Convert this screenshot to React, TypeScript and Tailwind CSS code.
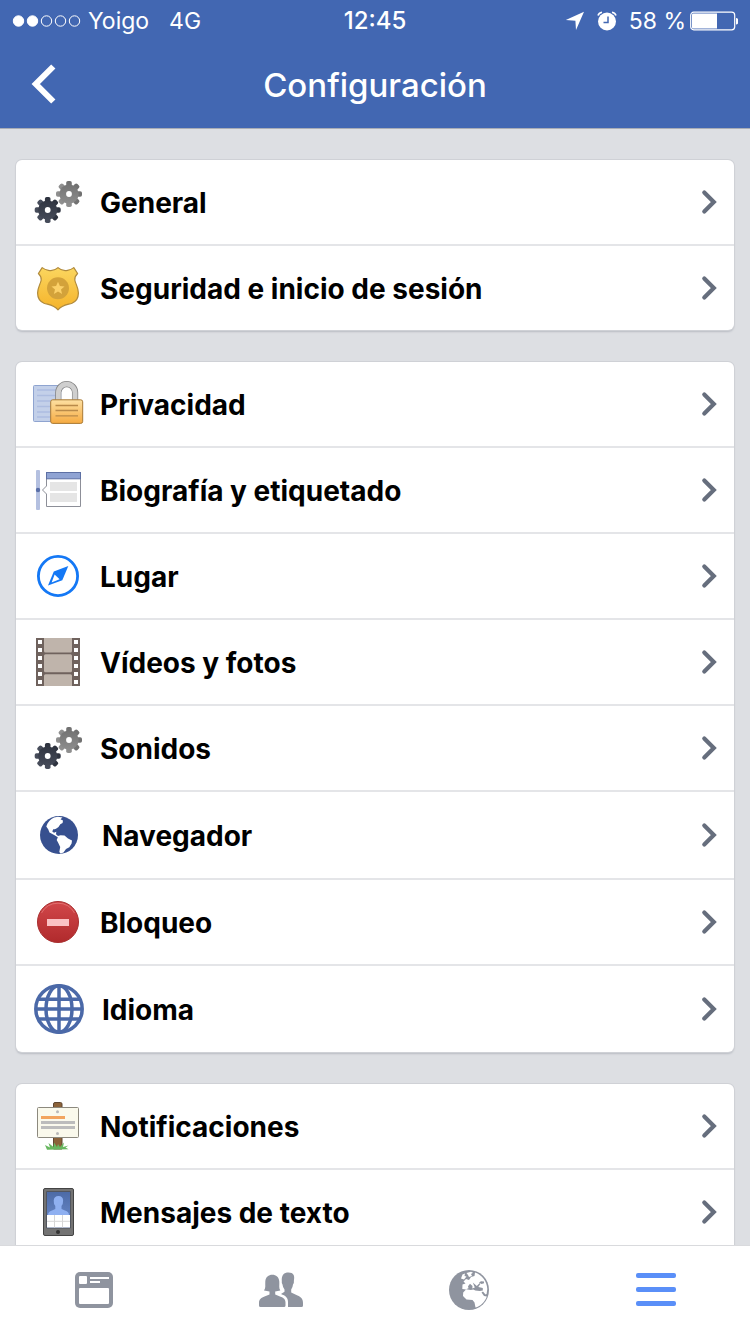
import type { ReactNode } from "react";

interface Item {
    label: string;
    icon: ReactNode;
}

function Gear({ x, y, fill }: { x: number; y: number; fill: string }) {
    return (
        <g transform={`translate(${x} ${y})`} fill={fill}>
            {[0, 45, 90, 135].map((angle) => (
                <rect key={angle} x="-2.8" y="-13" width="5.6" height="26" rx="1.8" transform={`rotate(${angle})`} />
            ))}
            <circle r="9.6" />
            <circle r="2.9" fill="#fff" />
        </g>
    );
}

function GearsIcon() {
    return (
        <svg className="size-12 shrink-0" viewBox="0 0 48 48" aria-hidden="true">
            <defs>
                <linearGradient id="gearLight" gradientUnits="userSpaceOnUse" x1="0" y1="-13" x2="0" y2="13">
                    <stop offset="0" stopColor="#6f6f6f" />
                    <stop offset="1" stopColor="#919191" />
                </linearGradient>
                <linearGradient id="gearDark" gradientUnits="userSpaceOnUse" x1="0" y1="-13" x2="0" y2="13">
                    <stop offset="0" stopColor="#2c313d" />
                    <stop offset="1" stopColor="#484e5c" />
                </linearGradient>
            </defs>
            <Gear x={35} y={16} fill="url(#gearLight)" />
            <Gear x={13.7} y={32} fill="url(#gearDark)" />
        </svg>
    );
}

function BadgeIcon() {
    return (
        <svg className="size-12 shrink-0" viewBox="0 0 48 48" aria-hidden="true">
            <defs>
                <linearGradient id="gold" x1="0" y1="0" x2="0" y2="1">
                    <stop offset="0" stopColor="#fbd65f" />
                    <stop offset="1" stopColor="#f5b32a" />
                </linearGradient>
            </defs>
            <path
                d="M24 3.6C21.5 6 18 7 14.5 6.3C12 5.9 10 5 8.2 3.6L4.4 9.5C6.5 11.5 7.5 13.5 7.2 16C6.5 20 3.6 23.5 3.6 29C3.6 34 6 37.5 10 39.2C15 40.8 20 41 24 45.8C28 41 33 40.8 38 39.2C42 37.5 44.4 34 44.4 29C44.4 23.5 41.5 20 40.8 16C40.5 13.5 41.5 11.5 43.6 9.5L39.8 3.6C38 5 36 5.9 33.5 6.3C30 7 26.5 6 24 3.6Z"
                fill="url(#gold)"
                stroke="#b08a3c"
                strokeWidth="1.2"
                strokeLinejoin="round"
            />
            <circle cx="24" cy="24.3" r="11" fill="#d3a23a" />
            <path d="M24 17.8l1.9 4.3 4.6.4-3.5 3 1.1 4.5-4.1-2.4-4.1 2.4 1.1-4.5-3.5-3 4.6-.4z" fill="#fbd068" />
        </svg>
    );
}

function PrivacyIcon() {
    return (
        <svg className="size-12 shrink-0 overflow-visible" viewBox="0 0 48 48" aria-hidden="true">
            <defs>
                <linearGradient id="lockBody" x1="0" y1="0" x2="0" y2="1">
                    <stop offset="0" stopColor="#fde0a2" />
                    <stop offset="1" stopColor="#f6ab42" />
                </linearGradient>
            </defs>
            <rect x="-.5" y="5.5" width="30" height="36" rx="1" fill="#c3d0e9" stroke="#8fa4d0" />
            {[10, 15.5, 21, 26.5, 32, 37].map((y) => (
                <path key={y} d={`M3 ${y}H24`} stroke="#adbde0" strokeWidth="1.5" />
            ))}
            <path d="M24.4 20V12.5a8.3 8.3 0 0 1 16.6 0V20" fill="none" stroke="#858585" strokeWidth="6.4" />
            <path d="M24.4 20V12.5a8.3 8.3 0 0 1 16.6 0V20" fill="none" stroke="#cfcfcf" strokeWidth="4.8" />
            <path d="M27.6 20V12.6a5.1 5.1 0 0 1 10.2 0V20z" fill="#fff" />
            <rect x="16.7" y="19.8" width="32" height="23.6" rx="2" fill="url(#lockBody)" stroke="#a87935" />
            <path d="M21.5 25.500H44M21.5 30.500H44M21.5 35.800H44" stroke="#b98a4a" strokeWidth="1.3" />
        </svg>
    );
}

function TimelineIcon() {
    return (
        <svg className="size-12 shrink-0" viewBox="0 0 48 48" aria-hidden="true">
            <rect x="2" y="4" width="4" height="40" rx="1" fill="#b4c0e0" />
            <circle cx="4" cy="24" r="2.2" fill="#5a6fa8" />
            <path d="M12.5 6.500h34v34h-34v-12.500l-4-4 4-4z" fill="#fff" stroke="#8d8f98" />
            <rect x="12.5" y="6.5" width="34" height="6.3" fill="#8fa3d3" stroke="#5d70a4" />
            <path d="M16 16h27v9H16zM16 27h27v9H16z" fill="#e5e5e5" />
        </svg>
    );
}

function CompassIcon() {
    return (
        <svg className="size-12 shrink-0" viewBox="0 0 48 48" aria-hidden="true">
            <circle cx="24" cy="24" r="19.6" fill="none" stroke="#1478f5" strokeWidth="2.8" />
            <path d="M34.3 14L19.8 19.4L14 33.6L28.3 28.2Z" fill="#1478f5" />
            <path d="M20.600 22.600L25.600 27.300L17.600 30.400Z" fill="#fff" />
        </svg>
    );
}

function FilmIcon() {
    return (
        <svg className="size-12 shrink-0" viewBox="0 0 48 48" aria-hidden="true">
            <path d="M2 0h44v48H2z" fill="#6f625d" />
            <path
                d="M10 0h28v13q0 1.500-1.500 1.500h-25Q10 14.500 10 13zM11.500 16.300h25q1.500 0 1.500 1.500v15q0 1.500-1.500 1.500h-25q-1.500 0-1.500-1.500v-15q0-1.500 1.500-1.500zM11.500 36.200h25q1.500 0 1.500 1.500V48H10V37.700q0-1.500 1.500-1.500z"
                fill="#bfb4ab"
            />
            {[2, 10, 18, 26, 34, 42].map((y) => (
                <path key={y} d={`M4 ${y}h4v4H4zM40 ${y}h4v4h-4z`} fill="#fff" />
            ))}
        </svg>
    );
}

function AmericasIcon() {
    return (
        <svg className="size-[50px] shrink-0" viewBox="0 0 50 50" aria-hidden="true">
            <circle cx="25" cy="25" r="19" fill="#37508f" />
            <path
                d="M12.3 16.5C13.5 12 16.500 9.500 20 7.600L24 6.800L28.500 7.600L26.500 9.300L29 10.500L28.600 13L26.300 14.300L24.500 17L22 18.800L20.600 19.300L19.200 19.200L18.300 21.400L20 22.800L22.300 21.800L22 24.300L24 26L26.500 25.200L30.500 25.600L34 28.600L38 30.500L37.600 33.500L35.300 37.200L32 39L29.500 42.500L26.600 43.400L25.300 42L26.200 37L24.300 33L22.700 30L23.800 27.300L21 25.500L18.300 23.900L15.500 22.600L14.200 19.200Z"
                fill="#fff"
            />
        </svg>
    );
}

function BlockIcon() {
    return (
        <svg className="size-12 shrink-0" viewBox="0 0 48 48" aria-hidden="true">
            <defs>
                <linearGradient id="stop" x1="0" y1="0" x2="0" y2="1">
                    <stop offset="0" stopColor="#d2474a" />
                    <stop offset="1" stopColor="#b02a2c" />
                </linearGradient>
            </defs>
            <circle cx="24" cy="24" r="20.5" fill="url(#stop)" stroke="#a82f2f" />
            <path d="M7.500 15a18.800 18.800 0 0 1 33 0" fill="none" stroke="#e47a78" strokeWidth=".8" />
            <path d="M13 21h22v7H13z" fill="#fbc1c3" />
        </svg>
    );
}

function LanguageIcon() {
    return (
        <svg className="size-[50px] shrink-0" viewBox="0 0 50 50" fill="none" stroke="#4b69a8" strokeWidth="3.5" aria-hidden="true">
            <circle cx="25" cy="25" r="23.2" />
            <ellipse cx="25" cy="25" rx="13" ry="23.2" />
            <path d="M25 2v46M2 25h46M4 15.300h42M4 35h42" />
        </svg>
    );
}

function SignIcon() {
    return (
        <svg className="size-12 shrink-0" viewBox="0 0 48 48" aria-hidden="true">
            <path d="M19.500 47V2q0-1.500 1.500-1.500h5.500Q28 .5 28 2V47z" fill="#8b6239" stroke="#5f4630" />
            <rect x="3.5" y="5.5" width="41" height="30" rx="1" fill="#faf9ec" stroke="#8c897e" />
            <path d="M7 15.500h24" stroke="#f2a45f" strokeWidth="3" />
            <path d="M7 20.500h34M7 25.500h34" stroke="#bcbcbc" strokeWidth="3" />
            <circle cx="23.5" cy="9.7" r="1.5" fill="#b9b9b9" />
            <circle cx="23.5" cy="31.4" r="1.5" fill="#b9b9b9" />
            <path d="M13 47.700L11 43l5 2.500L14.500 41l5 4 .5-4.500 3 4.500 1-3 2 3 4-4.500-1 4.500 5.500-1.500-3 2 3 1.700z" fill="#67b75f" />
        </svg>
    );
}

function PhoneIcon() {
    return (
        <svg className="size-12 shrink-0" viewBox="0 0 48 48" aria-hidden="true">
            <defs>
                <linearGradient id="screen" x1="0" y1="0" x2="0" y2="1">
                    <stop offset="0" stopColor="#4c6aa6" />
                    <stop offset="1" stopColor="#6f8fd0" />
                </linearGradient>
            </defs>
            <rect x="9.500" y=".5" width="30" height="47" rx="1.5" fill="#737373" stroke="#444" />
            <path d="M12.500 3.500h24v36.500h-24z" fill="url(#screen)" stroke="#51555e" />
            <path d="M14 27q0-3.500 4-4.500l3.300-1.500v-3q-1.800-2-1.600-5.500Q20 8 24.500 8t4.600 4.500q.2 3.500-1.600 5.500v3l3.500 1.500q4 1 4 4.500z" fill="#8fb0f1" />
            <path d="M13 27h23v12.500H13z" fill="#fff" />
            <path d="M20.500 27v12.500M28.500 27v12.500M13 33.300h23" stroke="#d6d6d6" />
            <circle cx="24" cy="43.9" r="2" fill="#333" />
        </svg>
    );
}

const groups: Item[][] = [
    [
        { label: "General", icon: <GearsIcon /> },
        { label: "Seguridad e inicio de sesión", icon: <BadgeIcon /> },
    ],
    [
        { label: "Privacidad", icon: <PrivacyIcon /> },
        { label: "Biografía y etiquetado", icon: <TimelineIcon /> },
        { label: "Lugar", icon: <CompassIcon /> },
        { label: "Vídeos y fotos", icon: <FilmIcon /> },
        { label: "Sonidos", icon: <GearsIcon /> },
        { label: "Navegador", icon: <AmericasIcon /> },
        { label: "Bloqueo", icon: <BlockIcon /> },
        { label: "Idioma", icon: <LanguageIcon /> },
    ],
    [
        { label: "Notificaciones", icon: <SignIcon /> },
        { label: "Mensajes de texto", icon: <PhoneIcon /> },
    ],
];

function StatusBar() {
    return (
        <div className="grid grid-cols-3 items-center h-10 pt-0.5 px-3 text-[23px] leading-7">
            <div className="flex items-center">
                <svg className="w-[70px] h-3 mr-1.5" viewBox="0 0 70 12" fill="none" stroke="#fff" aria-hidden="true">
                    <circle cx="6.5" cy="6" r="5.2" fill="#fff" />
                    <circle cx="20.5" cy="6" r="5.2" fill="#fff" />
                    <circle cx="34.5" cy="6" r="5.2" />
                    <circle cx="48.5" cy="6" r="5.2" />
                    <circle cx="62.500" cy="6" r="5.2" />
                </svg>
                <span className="mr-5">Yoigo</span>
                <span>4G</span>
            </div>
            <span className="text-center text-2xl leading-7 font-medium">12:45</span>
            <div className="flex items-center justify-end">
                <svg className="size-5 mr-3" viewBox="0 0 20 20" fill="#fff" aria-hidden="true">
                    <path d="M19 .800L.8 9l9.600.7L11 19z" />
                </svg>
                <svg className="size-5 mr-3" viewBox="0 0 20 20" aria-hidden="true">
                    <circle cx="10" cy="10.5" r="9" fill="#fff" />
                    <path d="M1 4.500Q1.800 2 5 1.300M19 4.500Q18.200 2 15 1.300" fill="none" stroke="#fff" strokeWidth="1.6" />
                    <path d="M11 5.500v6H6.500" fill="none" stroke="#4267b2" strokeWidth="1.5" />
                </svg>
                <span className="mr-1 whitespace-nowrap">58 %</span>
                <svg className="w-12 h-5 shrink-0" viewBox="0 0 48 20" fill="none" aria-hidden="true">
                    <rect x=".7" y="1.200" width="44" height="17.600" rx="3" stroke="#fff" strokeWidth="1.2" />
                    <path d="M2 3.500q0-1 1-1h24v15H3q-1 0-1-1z" fill="#fff" />
                    <path d="M46 7q2.500 0 2.500 3.200T46 13.500z" fill="#fff" />
                </svg>
            </div>
        </div>
    );
}

function Row({ item }: { item: Item }) {
    return (
        <li className="border-b-2 border-[#e4e5e8] last:border-b-0">
            <a href="#" className="flex items-center gap-[18px] pl-[18px] pr-4 py-[18px]">
                {item.icon}
                <span className="grow pt-0.5 text-[28px] leading-9 font-bold text-black">{item.label}</span>
                <svg
                    className="w-5 h-7 shrink-0"
                    viewBox="0 0 20 28"
                    fill="none"
                    stroke="#666e7d"
                    strokeWidth="4.2"
                    strokeLinecap="round"
                    aria-hidden="true"
                >
                    <path d="M6.300 4.500L15.800 14L6.300 23.500" />
                </svg>
            </a>
        </li>
    );
}

export default function App() {
    return (
        <div className="h-screen flex flex-col overflow-hidden bg-[#dddfe3] font-['Inter','Liberation_Sans',sans-serif]">
            <header className="shrink-0 bg-[#4267b2] text-white border-b border-[#a9adb6]">
                <StatusBar />
                <div className="grid grid-cols-[80px_1fr_80px] items-center h-[88px]">
                    <button type="button" aria-label="Atrás" className="pl-[30px]">
                        <svg className="w-7 h-10" viewBox="0 0 28 40" fill="none" stroke="#fff" strokeWidth="6" aria-hidden="true">
                            <path d="M23.300 2.500L5.800 20L23.300 37.500" />
                        </svg>
                    </button>
                    <h1 className="pt-0.5 text-center text-[33px] leading-10 font-medium">Configuración</h1>
                </div>
            </header>

            {/* Settings groups */}
            <main className="grow min-h-0 overflow-hidden px-4 pt-[31px] flex flex-col gap-8">
                {groups.map((group, index) => (
                    <ul key={index} className="shrink-0 bg-white rounded-md shadow-[0_0_0_1px_#cfd1d6,0_2px_2px_#b9bcc3]">
                        {group.map((item) => (
                            <Row key={item.label} item={item} />
                        ))}
                    </ul>
                ))}
            </main>

            {/* Tab bar */}
            <nav className="relative shrink-0 grid grid-cols-4 h-[89px] bg-white border-t border-[#d9dadd]">
                <button type="button" aria-label="Noticias" className="flex items-center justify-center">
                    <svg className="w-[38px] h-9" viewBox="0 0 38 36" aria-hidden="true">
                        <rect width="38" height="36" rx="5" fill="#8f949f" />
                        <path d="M4 5q0-1 1-1h6q1 0 1 1v6q0 1-1 1H5q-1 0-1-1zM15 5h19v2H15zM15 9h10v2H15zM4 17q0-1 1-1h28q1 0 1 1v14q0 1-1 1H5q-1 0-1-1z" fill="#fff" />
                    </svg>
                </button>
                <button type="button" aria-label="Amigos" className="flex items-center justify-center">
                    <svg className="w-11 h-9" viewBox="0 0 44 36" fill="#8f949f" aria-hidden="true">
                        <path d="M1.500 35Q0 35 0 33.500V31C0 27 2.500 25.500 5.500 24.500L10.500 22.500V19.500L5 18.500C7 16 6 13 6.300 9.500C6.700 5 9.500 2.800 13.300 2.800S19.900 5 20.300 9.500C20.600 13 19.600 16 21.300 18.500L16.200 19.500V22.500L21 24.500C24 25.500 26.500 27 26.500 30.500V33.500Q26.500 35 25 35z" />
                        <path d="M29 35V30C29 25.500 26.500 23.700 22 22L25.500 19.800V17.500Q23.800 15.500 23.500 12.500Q22.500 11.500 22.800 9C22.300 3 25 .5 29.500 .5C34.500 .5 36 3.500 34.900 8.700Q35.200 11.500 34 12.500Q33.700 15.500 32.200 17.500V20.500L38.500 23.500C42 25 44 27 44 31V33.500Q44 35 42.500 35z" />
                    </svg>
                </button>
                <button type="button" aria-label="Notificaciones" className="flex items-center justify-center">
                    <svg className="size-10" viewBox="0 0 40 40" aria-hidden="true">
                        <circle cx="20" cy="20" r="20" fill="#8f949f" />
                        <path
                            d="M26 2.600C33 5 38 11.500 38.300 19L37.600 24L36.500 24.500L34 21.500L32.500 22.500L35 26L37.800 26.500C36 32 31.500 36.300 26.500 37.600L25.500 32.500L23.500 30L17.500 29.500L14 26L14.200 22.500L17 19.500L13.300 19L13.500 14.500L16.500 13.500L14.500 11.500L17 9L20 10L22 7L25.500 6z"
                            fill="#fff"
                        />
                        <path d="M12 8.500l1.500-4 2.500-1-.5 2.500 2 .5-2.500 3zM17.500 3l4.500-1.200 2 1-2 1.200 1 2-3 1-1-2z" fill="#fff" />
                        <path
                            d="M17 19.300l2.500-1-.5-2 2-2.500 2.500 2.200-.2 2.500 2.500-1-2-5 4 3.500 3-3 .5 1-2 3 4.500 1v2.500l-3 .5-4.500-.5-2-1-2.500.5zM30 12.500l2-1.300 3 .2v1.800l-2.500.8z"
                            fill="#8f949f"
                        />
                    </svg>
                </button>
                <button type="button" aria-label="Menú" className="flex items-center justify-center">
                    <svg className="w-10 h-[34px]" viewBox="0 0 40 34" fill="#5a8ff8" aria-hidden="true">
                        <rect width="40" height="5" rx="2" />
                        <rect y="14" width="40" height="5" rx="2" />
                        <rect y="28" width="40" height="5" rx="2" />
                    </svg>
                </button>
            </nav>
        </div>
    );
}
